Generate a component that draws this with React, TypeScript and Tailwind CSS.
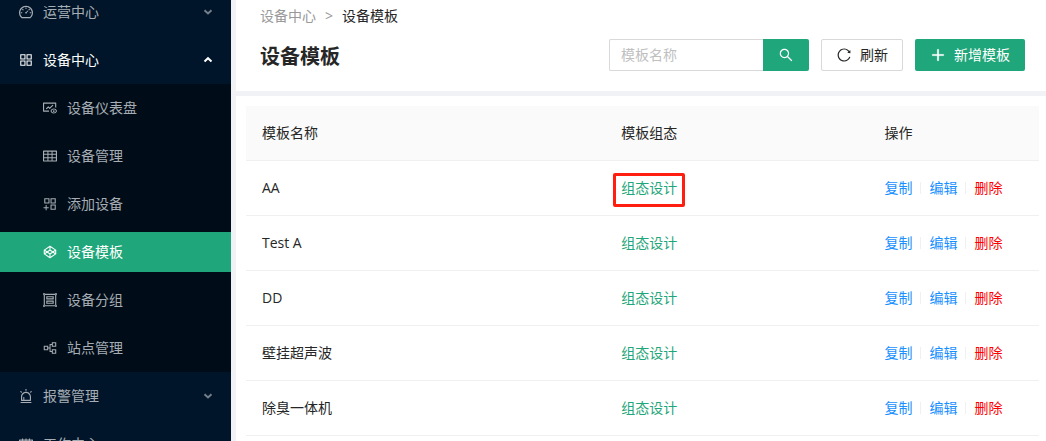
import { FC } from 'react'
import type { IconType } from 'react-icons'
import {
  AiOutlineAlert,
  AiOutlineAppstore,
  AiOutlineAppstoreAdd,
  AiOutlineCodepen,
  AiOutlineDashboard,
  AiOutlineFundView,
  AiOutlineGroup,
  AiOutlinePartition,
  AiOutlinePlus,
  AiOutlineReload,
  AiOutlineSchedule,
  AiOutlineSearch,
  AiOutlineTable,
} from 'react-icons/ai'
import clsx from 'clsx'

interface MenuItem {
  label: string
  icon: IconType
  active?: boolean
  children?: MenuItem[]
}

const menu: MenuItem[] = [
  { label: '运营中心', icon: AiOutlineDashboard },
  {
    label: '设备中心',
    icon: AiOutlineAppstore,
    children: [
      { label: '设备仪表盘', icon: AiOutlineFundView },
      { label: '设备管理', icon: AiOutlineTable },
      { label: '添加设备', icon: AiOutlineAppstoreAdd },
      { label: '设备模板', icon: AiOutlineCodepen, active: true },
      { label: '设备分组', icon: AiOutlineGroup },
      { label: '站点管理', icon: AiOutlinePartition },
    ],
  },
  { label: '报警管理', icon: AiOutlineAlert },
  { label: '工作中心', icon: AiOutlineSchedule },
]

const templates = ['AA', 'Test A', 'DD', '壁挂超声波', '除臭一体机']

const Arrow: FC<{ open: boolean }> = ({ open }) => (
  <svg width="10" height="10" viewBox="0 0 10 10" fill="none" stroke="currentColor" strokeWidth="2">
    <path d={open ? 'M1.5 6.5 5 3.2l3.5 3.3' : 'M1.5 3.2 5 6.5l3.5-3.3'} />
  </svg>
)

const Sidebar: FC = () => (
  <aside className="w-[231px] shrink-0 overflow-hidden bg-[#001529] text-[#a6adb4]">
    <nav className="-mt-3">
      {menu.map(({ label, icon: Icon, children }) => (
        <div key={label}>
          <button
            className={clsx(
              'flex h-12 w-full items-center gap-[9px] px-[18px]',
              children && 'text-white'
            )}
            aria-expanded={!!children}
          >
            <Icon size={16} />
            <span className="flex-1 text-left">{label}</span>
            <span className={clsx(!children && 'opacity-70')}>
              <Arrow open={!!children} />
            </span>
          </button>
          {children && (
            <div className="flex flex-col gap-2 bg-[#000c17] py-1">
              {children.map(({ label, icon: Icon, active }) => (
                <a
                  key={label}
                  href="#"
                  className={clsx(
                    'flex h-10 items-center gap-[9px] pl-[42px]',
                    active && 'bg-[#1fa67a] text-white'
                  )}
                >
                  <Icon size={16} />
                  {label}
                </a>
              ))}
            </div>
          )}
        </div>
      ))}
    </nav>
  </aside>
)

const PageHeader: FC = () => (
  <header className="bg-white pb-5 pl-6 pr-[21px] pt-[5px]">
    <div className="flex gap-[9px] text-[#999]">
      <a href="#">设备中心</a>
      <span>&gt;</span>
      <span className="text-[#262626]">设备模板</span>
    </div>
    <div className="mt-3 flex items-end justify-between">
      <h1 className="text-xl font-bold text-[#262626]">设备模板</h1>
      <div className="flex gap-3">
        <form className="flex" onSubmit={(e) => e.preventDefault()}>
          <input
            type="text"
            aria-label="模板名称"
            placeholder="模板名称"
            className="h-8 w-[154px] rounded-l-xs border border-r-0 border-[#d9d9d9] px-[11px] pb-0.5 outline-none placeholder:text-[#bfbfbf]"
          />
          <button
            aria-label="搜索"
            className="flex h-8 w-[46px] items-center justify-center rounded-r-xs bg-[#1fa67a] text-white"
          >
            <AiOutlineSearch size={16} />
          </button>
        </form>
        <button className="flex h-8 items-center gap-2 rounded-xs border border-[#d9d9d9] px-3.5 text-[#262626]">
          <AiOutlineReload size={16} />
          刷新
        </button>
        <button className="flex h-8 items-center gap-2 rounded-xs bg-[#1fa67a] px-[15px] text-white">
          <AiOutlinePlus size={16} strokeWidth={40} />
          新增模板
        </button>
      </div>
    </div>
  </header>
)

const TemplateTable: FC = () => (
  <section className="flex-1 bg-white pl-2.5 pr-[7px] pt-2.5">
    <table className="w-full table-fixed text-left text-[#262626]">
      <thead>
        <tr className="h-[54px] border-b border-[#f0f0f0] bg-[#fafafa]">
          <th className="w-[45.3%] px-4 font-normal">模板名称</th>
          <th className="w-[33.2%] px-4 font-normal">模板组态</th>
          <th className="px-4 font-normal">操作</th>
        </tr>
      </thead>
      <tbody>
        {templates.map((name, i) => (
          <tr key={name} className="h-[55px] border-b border-[#f0f0f0]">
            <td className="px-4">{name}</td>
            <td className="px-4">
              <a href="#" className="relative inline-block text-[#1fa67a]">
                组态设计
                {i === 0 && (
                  <span className="absolute -inset-x-2 -bottom-2 -top-1 rounded-xs border-3 border-[#ff1e10]" />
                )}
              </a>
            </td>
            <td className="px-4">
              <div className="flex items-center">
                <a href="#" className="text-[#1890ff]">复制</a>
                <span className="mx-2 h-3 w-px bg-[#f0f0f0]" />
                <a href="#" className="text-[#1890ff]">编辑</a>
                <span className="mx-2 h-3 w-px bg-[#f0f0f0]" />
                <a href="#" className="text-[#ff0000]">删除</a>
              </div>
            </td>
          </tr>
        ))}
      </tbody>
    </table>
  </section>
)

const App: FC = () => (
  <div className="flex h-screen gap-[5px] overflow-hidden bg-[#f0f2f5] font-['Open_Sans','Noto_Sans_CJK_SC',sans-serif] text-sm leading-[22px]">
    <Sidebar />
    <main className="flex min-w-0 flex-1 flex-col gap-[5px]">
      <PageHeader />
      <TemplateTable />
    </main>
  </div>
)

export default App
